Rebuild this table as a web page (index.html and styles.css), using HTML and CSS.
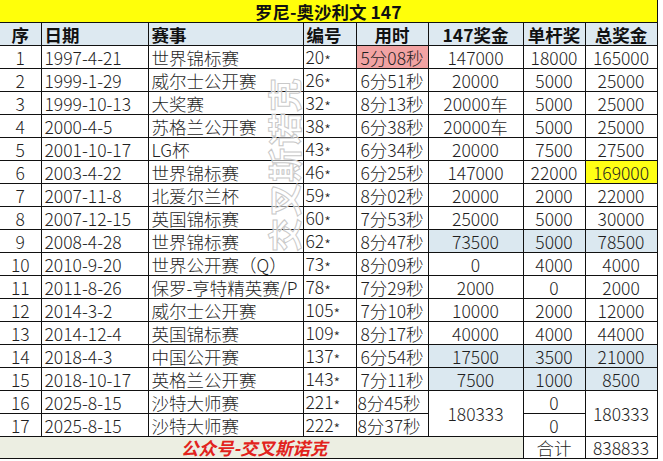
FILE: index.html
```html
<!DOCTYPE html>
<html lang="zh-CN">
<head>
<meta charset="utf-8">
<title>罗尼-奥沙利文 147</title>
<link rel="stylesheet" href="styles.css">
</head>
<body>
<div class="sheet">
<table class="grid">
  <colgroup>
    <col class="c-no"><col class="c-date"><col class="c-event"><col class="c-id"><col class="c-time"><col class="c-prize"><col class="c-hb"><col class="c-total">
  </colgroup>
  <tr class="title-row"><td colspan="8" class="title">罗尼-奥沙利文 147</td></tr>
  <tr class="head">
    <td class="ctr">序</td><td class="lft">日期</td><td class="lft">赛事</td><td class="lft">编号</td><td class="ctr">用时</td><td class="ctr">147奖金</td><td class="ctr">单杆奖</td><td class="ctr">总奖金</td>
  </tr>
  <tr><td class="ctr">1</td><td class="lft">1997-4-21</td><td class="lft">世界锦标赛</td><td class="id">20<span class="star">*</span></td><td class="ctr red">5分08秒</td><td class="ctr">147000</td><td class="ctr">18000</td><td class="ctr">165000</td></tr>
  <tr><td class="ctr">2</td><td class="lft">1999-1-29</td><td class="lft">威尔士公开赛</td><td class="id">26<span class="star">*</span></td><td class="ctr">6分51秒</td><td class="ctr">20000</td><td class="ctr">5000</td><td class="ctr">25000</td></tr>
  <tr><td class="ctr">3</td><td class="lft">1999-10-13</td><td class="lft">大奖赛</td><td class="id">32<span class="star">*</span></td><td class="ctr">8分13秒</td><td class="ctr">20000车</td><td class="ctr">5000</td><td class="ctr">25000</td></tr>
  <tr><td class="ctr">4</td><td class="lft">2000-4-5</td><td class="lft">苏格兰公开赛</td><td class="id">38<span class="star">*</span></td><td class="ctr">6分38秒</td><td class="ctr">20000车</td><td class="ctr">5000</td><td class="ctr">25000</td></tr>
  <tr><td class="ctr">5</td><td class="lft">2001-10-17</td><td class="lft">LG杯</td><td class="id">43<span class="star">*</span></td><td class="ctr">6分34秒</td><td class="ctr">20000</td><td class="ctr">7500</td><td class="ctr">27500</td></tr>
  <tr><td class="ctr">6</td><td class="lft">2003-4-22</td><td class="lft">世界锦标赛</td><td class="id">46<span class="star">*</span></td><td class="ctr">6分25秒</td><td class="ctr">147000</td><td class="ctr">22000</td><td class="ctr yel">169000</td></tr>
  <tr><td class="ctr">7</td><td class="lft">2007-11-8</td><td class="lft">北爱尔兰杯</td><td class="id">59<span class="star">*</span></td><td class="ctr">8分02秒</td><td class="ctr">20000</td><td class="ctr">2000</td><td class="ctr">22000</td></tr>
  <tr><td class="ctr">8</td><td class="lft">2007-12-15</td><td class="lft">英国锦标赛</td><td class="id">60<span class="star">*</span></td><td class="ctr">7分53秒</td><td class="ctr">25000</td><td class="ctr">5000</td><td class="ctr">30000</td></tr>
  <tr><td class="ctr">9</td><td class="lft">2008-4-28</td><td class="lft">世界锦标赛</td><td class="id">62<span class="star">*</span></td><td class="ctr">8分47秒</td><td class="ctr blue">73500</td><td class="ctr blue">5000</td><td class="ctr blue">78500</td></tr>
  <tr><td class="ctr">10</td><td class="lft">2010-9-20</td><td class="lft">世界公开赛（Q）</td><td class="id">73<span class="star">*</span></td><td class="ctr">8分09秒</td><td class="ctr">0</td><td class="ctr">4000</td><td class="ctr">4000</td></tr>
  <tr><td class="ctr">11</td><td class="lft">2011-8-26</td><td class="lft">保罗-亨特精英赛/P</td><td class="id">78<span class="star">*</span></td><td class="ctr">7分29秒</td><td class="ctr">2000</td><td class="ctr">0</td><td class="ctr">2000</td></tr>
  <tr><td class="ctr">12</td><td class="lft">2014-3-2</td><td class="lft">威尔士公开赛</td><td class="id">105<span class="star">*</span></td><td class="ctr">7分10秒</td><td class="ctr">10000</td><td class="ctr">2000</td><td class="ctr">12000</td></tr>
  <tr><td class="ctr">13</td><td class="lft">2014-12-4</td><td class="lft">英国锦标赛</td><td class="id">109<span class="star">*</span></td><td class="ctr">8分17秒</td><td class="ctr">40000</td><td class="ctr">4000</td><td class="ctr">44000</td></tr>
  <tr><td class="ctr">14</td><td class="lft">2018-4-3</td><td class="lft">中国公开赛</td><td class="id">137<span class="star">*</span></td><td class="ctr">6分54秒</td><td class="ctr blue">17500</td><td class="ctr blue">3500</td><td class="ctr blue">21000</td></tr>
  <tr><td class="ctr">15</td><td class="lft">2018-10-17</td><td class="lft">英格兰公开赛</td><td class="id">143<span class="star">*</span></td><td class="ctr">7分11秒</td><td class="ctr blue">7500</td><td class="ctr blue">1000</td><td class="ctr blue">8500</td></tr>
  <tr><td class="ctr">16</td><td class="lft">2025-8-15</td><td class="lft">沙特大师赛</td><td class="id">221<span class="star">*</span></td><td class="lft tight">8分45秒</td><td class="ctr" rowspan="2">180333</td><td class="ctr">0</td><td class="ctr" rowspan="2">180333</td></tr>
  <tr><td class="ctr">17</td><td class="lft">2025-8-15</td><td class="lft">沙特大师赛</td><td class="id">222<span class="star">*</span></td><td class="lft tight">8分37秒</td><td class="ctr">0</td></tr>
  <tr class="foot"><td colspan="6" class="slogan">公众号-交叉斯诺克</td><td class="ctr sum">合计</td><td class="ctr sum">838833</td></tr>
</table>
<div class="watermark">交叉斯诺克</div>
</div>
</body>
</html>
```
FILE: styles.css
```css
html, body {
  margin: 0;
  padding: 0;
  background: #ffffff;
}

.sheet {
  position: relative;
  width: 663px;
  height: 461px;
  overflow: hidden;
  font-family: "Noto Sans CJK SC", "Noto Sans", sans-serif;
  color: #1f1f1f;
}

.grid {
  border-collapse: collapse;
  table-layout: fixed;
  width: 657px;
  font-size: 17.5px;
  font-weight: 300;
}

.c-no { width: 41px; }
.c-date { width: 107px; }
.c-event { width: 155px; }
.c-id { width: 53px; }
.c-time { width: 72px; }
.c-prize { width: 95px; }
.c-hb { width: 62px; }
.c-total { width: 72px; }

.grid td {
  border: 1px solid #111;
  height: 22px;
  padding: 0;
  line-height: 21px;
  white-space: nowrap;
  overflow: hidden;
}

.grid tr td:first-child {
  border-left: none;
}

.title-row td {
  border-top: none;
}

.title {
  background: #ffff0a;
  text-align: center;
  font-weight: bold;
  color: #111;
}

.head td {
  background: #dde9f1;
  font-weight: bold;
  color: #111;
}

.ctr { text-align: center; }
.lft { text-align: left; padding-left: 3px !important; }
.tight { padding-left: 1px !important; }
.id { text-align: left; padding-left: 2px !important; }

.star {
  font-size: 15px;
  line-height: 1;
  vertical-align: -3px;
}

.red { background: #f2a3a3; }
.yel { background: #ffff14; }
.blue { background: #dbe8f0; }

.foot td { height: 21px; }

.slogan {
  background: #eceee2;
  color: #e2231d;
  font-weight: bold;
  font-style: italic;
  text-align: center;
  padding-right: 14px !important;
}

.sum { background: #ffffff; }

.watermark {
  position: absolute;
  left: 196px;
  top: 144px;
  width: 176px;
  height: 40px;
  transform: rotate(-90deg);
  font-size: 34px;
  font-weight: bold;
  line-height: 40px;
  letter-spacing: 1px;
  color: rgba(255, 255, 255, 0.55);
  -webkit-text-stroke: 1px #c9c9c9;
  white-space: nowrap;
}
```
